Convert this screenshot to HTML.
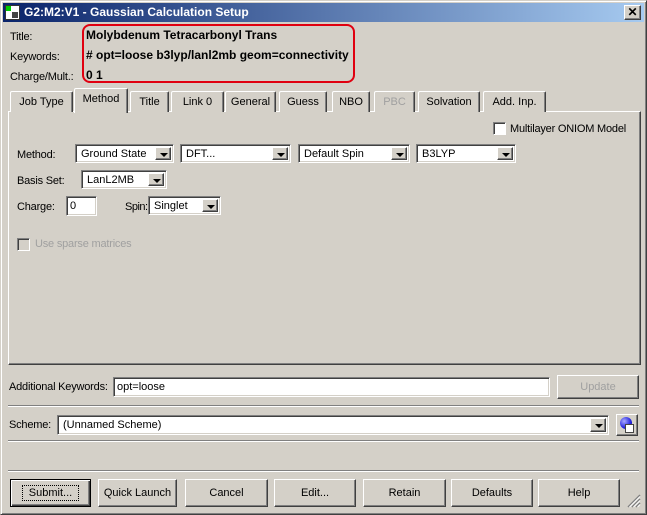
<!DOCTYPE html>
<html><head><meta charset="utf-8"><style>
*{box-sizing:border-box;margin:0;padding:0}
body{width:647px;height:515px;background:#d4d0c8;font-family:"Liberation Sans",sans-serif;font-size:11px;color:#000;position:relative;overflow:hidden}
.a{position:absolute;white-space:nowrap}
.l{font-size:11px;letter-spacing:-0.2px;padding-top:2px}
.win{position:absolute;left:0;top:0;width:647px;height:515px;border:1px solid;border-color:#d4d0c8 #404040 #404040 #d4d0c8;box-shadow:inset 1px 1px #fff,inset -1px -1px #808080}
.tb{position:absolute;left:3px;top:3px;width:641px;height:19px;background:linear-gradient(to right,#0a246a,#a6caf0)}
.sunk{position:absolute;background:#fff;border:1px solid;border-color:#808080 #fff #fff #808080;box-shadow:inset 1px 1px #404040,inset -1px -1px #d4d0c8;white-space:nowrap}
.btn{position:absolute;background:#d4d0c8;border:1px solid;border-color:#fff #404040 #404040 #fff;box-shadow:inset -1px -1px #808080;text-align:center;font-size:11px;white-space:nowrap}
.dd{position:absolute;right:2px;top:2px;width:16px;bottom:2px;background:#d4d0c8;border:1px solid;border-color:#fff #404040 #404040 #fff;box-shadow:inset -1px -1px #808080}
.dd:after{content:"";position:absolute;left:4px;top:5px;border-left:4px solid transparent;border-right:4px solid transparent;border-top:4px solid #000}
.cb{padding:3px 0 0 5px;font-size:11px}
.tab{position:absolute;top:91px;height:21px;border:1px solid;border-bottom:none;border-color:#fff #404040 #404040 #fff;border-radius:2px 2px 0 0;box-shadow:inset -1px 0 #808080;text-align:center;padding-top:4px;font-size:11px;background:#d4d0c8;white-space:nowrap}
.sep{position:absolute;left:8px;width:631px;height:2px;border-top:1px solid #808080;border-bottom:1px solid #fff}
.chk{position:absolute;width:13px;height:13px;background:#fff;border:1px solid;border-color:#808080 #fff #fff #808080;box-shadow:inset 1px 1px #404040}
</style></head><body>
<div class="win"></div>
<div class="tb"></div>
<div class="a" style="left:5px;top:5px;width:15px;height:15px;background:#fff;border:1px solid #333"><div style="position:absolute;left:0;top:0;width:5px;height:5px;background:#0c0"></div><div style="position:absolute;left:6px;top:6px;width:6px;height:6px;background:#444"></div></div>
<div class="a" style="left:24px;top:5px;color:#fff;font-weight:bold;font-size:12px">G2:M2:V1 - Gaussian Calculation Setup</div>
<div class="btn" style="left:624px;top:5px;width:17px;height:15px;font-size:12px;font-weight:bold;line-height:12px">✕</div>

<div class="a l" style="left:10px;top:29px">Title:</div>
<div class="a l" style="left:10px;top:49px">Keywords:</div>
<div class="a l" style="left:10px;top:69px">Charge/Mult.:</div>
<div class="a" style="left:86px;top:28px;font-size:12px;font-weight:bold">Molybdenum Tetracarbonyl Trans</div>
<div class="a" style="left:86px;top:48px;font-size:12px;font-weight:bold"># opt=loose b3lyp/lanl2mb geom=connectivity</div>
<div class="a" style="left:86px;top:68px;font-size:12px;font-weight:bold">0 1</div>
<div class="a" style="left:82px;top:24px;width:273px;height:59px;border:2px solid #e00010;border-radius:8px"></div>

<div class="a" style="left:8px;top:111px;width:633px;height:254px;border:1px solid;border-color:#fff #404040 #404040 #fff;box-shadow:inset -1px -1px #808080"></div>
<div class="tab" style="left:10px;width:63px">Job Type</div>
<div class="tab" style="left:74px;width:54px;top:88px;height:25px;z-index:2;padding-top:4px">Method</div>
<div class="tab" style="left:130px;width:39px">Title</div>
<div class="tab" style="left:171px;width:53px">Link 0</div>
<div class="tab" style="left:225px;width:51px">General</div>
<div class="tab" style="left:279px;width:48px">Guess</div>
<div class="tab" style="left:332px;width:38px">NBO</div>
<div class="tab" style="left:374px;width:41px;color:#a0a0a0">PBC</div>
<div class="tab" style="left:418px;width:62px">Solvation</div>
<div class="tab" style="left:483px;width:63px">Add. Inp.</div>

<div class="chk" style="left:493px;top:122px"></div>
<div class="a l" style="left:510px;top:121px">Multilayer ONIOM Model</div>

<div class="a l" style="left:17px;top:147px">Method:</div>
<div class="sunk cb" style="left:75px;top:144px;width:99px;height:19px">Ground State<div class="dd"></div></div>
<div class="sunk cb" style="left:180px;top:144px;width:111px;height:19px">DFT...<div class="dd"></div></div>
<div class="sunk cb" style="left:298px;top:144px;width:112px;height:19px">Default Spin<div class="dd"></div></div>
<div class="sunk cb" style="left:416px;top:144px;width:100px;height:19px">B3LYP<div class="dd"></div></div>

<div class="a l" style="left:17px;top:173px">Basis Set:</div>
<div class="sunk cb" style="left:81px;top:170px;width:86px;height:19px">LanL2MB<div class="dd"></div></div>

<div class="a l" style="left:17px;top:199px">Charge:</div>
<div class="sunk cb" style="left:66px;top:196px;width:31px;height:20px;padding-left:3px;padding-top:3px">0</div>
<div class="a l" style="left:125px;top:199px;letter-spacing:-0.5px">Spin:</div>
<div class="sunk cb" style="left:148px;top:196px;width:73px;height:19px">Singlet<div class="dd"></div></div>

<div class="chk" style="left:17px;top:238px;background:#d4d0c8"></div>
<div class="a l" style="left:35px;top:236px;color:#a0a0a0">Use sparse matrices</div>

<div class="a l" style="left:9px;top:379px">Additional Keywords:</div>
<div class="sunk" style="left:113px;top:377px;width:437px;height:20px;padding:3px 3px;font-size:11px">opt=loose</div>
<div class="btn" style="left:557px;top:375px;width:82px;height:24px;padding-top:5px;color:#a0a0a0">Update</div>
<div class="sep" style="top:405px"></div>

<div class="a l" style="left:9px;top:417px">Scheme:</div>
<div class="sunk cb" style="left:57px;top:415px;width:552px;height:20px">(Unnamed Scheme)<div class="dd"></div></div>
<div class="btn" style="left:616px;top:414px;width:22px;height:22px"><div style="position:absolute;left:3px;top:2px;width:12px;height:12px;border-radius:50%;background:radial-gradient(circle at 35% 35%,#aaf,#22d 60%,#008)"></div><div style="position:absolute;left:8px;top:9px;width:9px;height:9px;background:#fff;border:1px solid #444"></div></div>
<div class="sep" style="top:440px"></div>
<div class="sep" style="top:470px"></div>

<div class="btn" style="left:10px;top:479px;width:81px;height:28px;padding-top:7px;border:1px solid #000;box-shadow:inset 1px 1px #fff,inset -1px -1px #404040,inset -2px -2px #808080"><span style="border:1px dotted #000;padding:1px 6px">Submit...</span></div>
<div class="btn" style="left:98px;top:479px;width:79px;height:28px;padding-top:7px">Quick Launch</div>
<div class="btn" style="left:185px;top:479px;width:83px;height:28px;padding-top:7px">Cancel</div>
<div class="btn" style="left:274px;top:479px;width:82px;height:28px;padding-top:7px">Edit...</div>
<div class="btn" style="left:363px;top:479px;width:83px;height:28px;padding-top:7px">Retain</div>
<div class="btn" style="left:451px;top:479px;width:82px;height:28px;padding-top:7px">Defaults</div>
<div class="btn" style="left:538px;top:479px;width:82px;height:28px;padding-top:7px">Help</div>
<svg class="a" style="left:627px;top:494px" width="14" height="14"><path d="M13 1L1 13M13 5L5 13M13 9L9 13" stroke="#808080" stroke-width="1.5"/><path d="M13 2.5L2.5 13M13 6.5L6.5 13M13 10.5L10.5 13" stroke="#fff" stroke-width="1"/></svg>
</body></html>
